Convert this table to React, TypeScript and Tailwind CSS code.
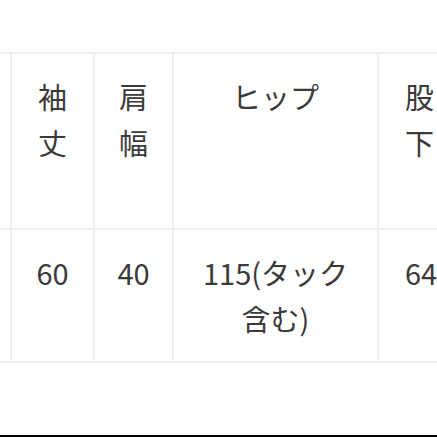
import React from "react";

const cell = "border-l-2 border-b-2 border-[#eeeeee] px-[16px] text-center";

export default function App() {
  return (
    <div
      className="w-[437px] h-[437px] overflow-hidden bg-white flex flex-col"
      style={{ fontFamily: '"Noto Sans CJK JP", "Noto Sans", sans-serif' }}
    >
      <div className="mt-[52px] ml-[-88px] border-t-2 border-[#eeeeee] text-[29px] leading-[46px] text-[#3a3a3a] w-max">
        <div className="grid grid-cols-[98px_83px_79px_205px_100px]">
          <div className={`${cell} border-l-0 h-[176px] pt-[19px]`} />
          <div className={`${cell} h-[176px] pt-[19px]`}>袖丈</div>
          <div className={`${cell} h-[176px] pt-[19px]`}>肩幅</div>
          <div className={`${cell} h-[176px] pt-[19px]`}>ヒップ</div>
          <div className={`${cell} h-[176px] pt-[19px] text-left pl-[26px] pr-[40px]`}>股下</div>
          <div className={`${cell} border-l-0 h-[133px] pt-[19px]`} />
          <div className={`${cell} h-[133px] pt-[19px]`}>60</div>
          <div className={`${cell} h-[133px] pt-[19px]`}>40</div>
          <div className={`${cell} h-[133px] pt-[19px]`}>115(タック含む)</div>
          <div className={`${cell} h-[133px] pt-[19px] text-left pl-[26px] pr-[20px] whitespace-nowrap`}>64</div>
        </div>
      </div>
      <div className="mt-auto h-[2px] bg-black" />
    </div>
  );
}
